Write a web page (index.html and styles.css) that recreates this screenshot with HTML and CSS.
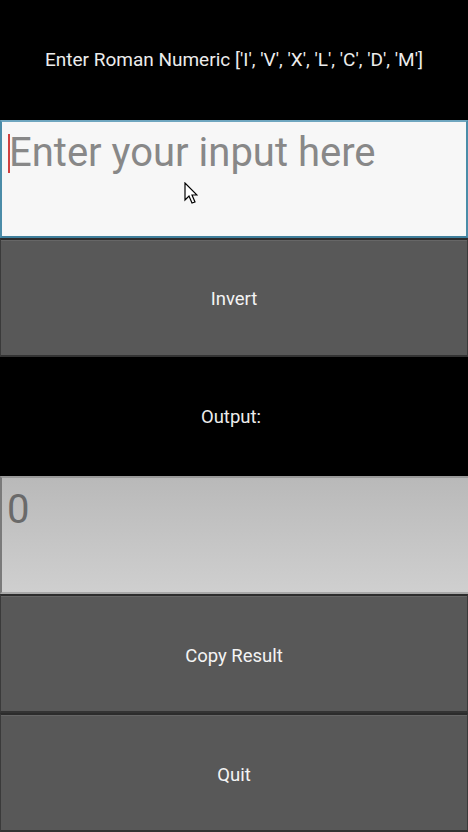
FILE: index.html
```html
<!DOCTYPE html>
<html>
<head>
<meta charset="utf-8">
<link rel="stylesheet" href="styles.css">
</head>
<body>
<div class="app">
  <div class="row label title">Enter Roman Numeric ['I', 'V', 'X', 'L', 'C', 'D', 'M']</div>
  <div class="row field input">
    <span class="caret"></span><span class="placeholder">Enter your input here</span>
    <svg class="pointer" width="14" height="24" viewBox="0 0 14 24"><path d="M1 1 L1 18 L5 14 L8 21 L11 20 L8 13 L13 13 Z" fill="#fff" stroke="#000" stroke-width="1.2" stroke-linejoin="miter"/></svg>
  </div>
  <div class="row btn">Invert</div>
  <div class="row label output-label">Output:</div>
  <div class="row field output"><span class="value">0</span></div>
  <div class="row btn">Copy Result</div>
  <div class="row btn">Quit</div>
</div>
</body>
</html>
```
FILE: styles.css
```css
html, body {
  margin: 0;
  padding: 0;
  background: #000;
}
.app {
  width: 468px;
  height: 832px;
  display: grid;
  grid-template-rows: repeat(7, 1fr);
  font-family: Roboto, "Noto Sans", sans-serif;
}
.row {
  box-sizing: border-box;
  min-height: 0;
}
.label {
  display: flex;
  align-items: center;
  justify-content: center;
  color: #ececec;
  font-size: 18.5px;
  padding-top: 3px;
}
.title {
  font-size: 19px;
  padding-top: 0;
}
.output-label {
  padding-right: 6px;
}
.field {
  position: relative;
  margin-top: 1px;
  font-size: 40px;
  line-height: 46px;
  display: flex;
  align-items: flex-start;
}
.input {
  background: #f7f7f7;
  border: 2px solid #4b8ca8;
  border-top-color: #6fa6bf;
  border-bottom-color: #3f7f9c;
  padding: 8px 6px;
}
.caret {
  display: inline-block;
  width: 2px;
  height: 39px;
  margin-top: 4px;
  margin-right: -1px;
  background: #d04040;
}
.placeholder {
  color: #888888;
}
.pointer {
  position: absolute;
  left: 182px;
  top: 60px;
}
.output {
  background: linear-gradient(#b9b9b9, #cfcfcf);
  border-top: 2px solid #9a9a9a;
  border-left: 2px solid #7a7a7a;
  border-bottom: 2px solid #a8a8a8;
  padding: 9px 5px;
}
.value {
  color: #6a6a6a;
}
.btn {
  background: #585858;
  color: #f4f4f4;
  font-size: 18.5px;
  display: flex;
  align-items: center;
  justify-content: center;
  padding-top: 4px;
  border-top: 2px solid #2c2c2c;
  border-bottom: 2px solid #333;
  border-left: 1px solid #3a3a3a;
  border-right: 1px solid #3a3a3a;
  box-shadow: inset 0 1px 0 #666;
}
```
